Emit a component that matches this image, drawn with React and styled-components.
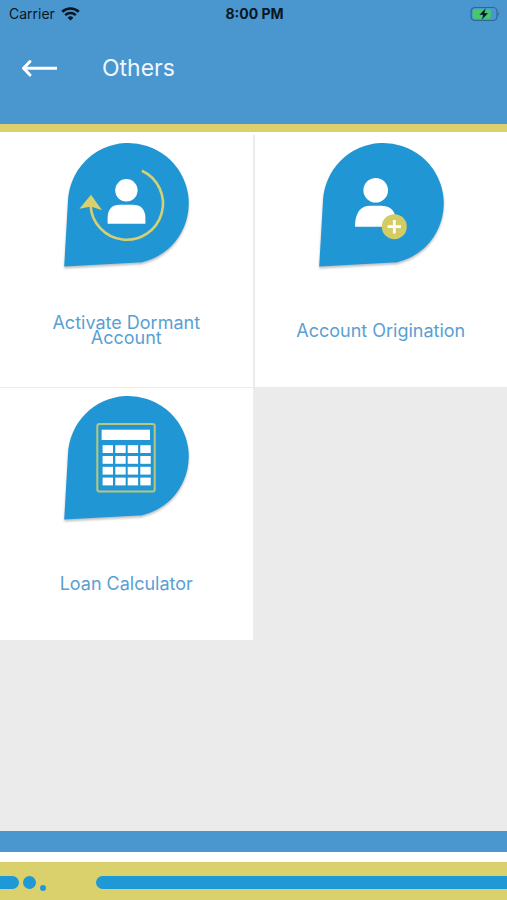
import React from "react";
import styled, { createGlobalStyle } from "styled-components";

const GlobalStyle = createGlobalStyle`
  * { box-sizing: border-box; }
  body { margin: 0; background: #ebebeb; font-family: Inter, "Liberation Sans", sans-serif; }
`;

const Screen = styled.div`
  min-height: 100vh;
  display: flex;
  flex-direction: column;
`;

const Header = styled.header`
  background: #4a96cf;
  border-bottom: 8px solid #dbd16c;
`;

const StatusBar = styled.div`
  display: grid;
  grid-template-columns: 1fr auto 1fr;
  align-items: center;
  height: 27px;
  padding: 0 7px 0 9px;
  font-size: 14px;
  color: #0a1622;
`;

const Carrier = styled.div`
  display: flex;
  align-items: center;
  gap: 6px;
`;

const Clock = styled.time`
  font-weight: 700;
`;

const BatteryIcon = styled.svg`
  justify-self: end;
`;

const TitleBar = styled.div`
  display: flex;
  align-items: center;
  gap: 43px;
  height: 97px;
  padding: 0 20px 16px;
`;

const BackButton = styled.button`
  display: flex;
  padding: 0;
  border: 0;
  background: none;
  cursor: pointer;
`;

const Title = styled.h1`
  margin: 0;
  font-size: 23px;
  font-weight: 400;
  line-height: 28px;
  color: #f0f7fc;
`;

const Menu = styled.main`
  flex: 1;
  display: grid;
  grid-template-columns: 1fr 1fr;
  align-content: start;
  gap: 1px 2px;
  border-top: 3px solid #ffffff;
  background: #ebebeb;
`;

const Tile = styled.button`
  display: flex;
  flex-direction: column;
  align-items: center;
  height: 252px;
  padding: 8px 36px 0;
  border: 0;
  background: #ffffff;
  font-family: inherit;
  cursor: pointer;
`;

const TileIcon = styled.svg`
  flex: none;
  overflow: visible;
`;

const Pin = styled.path`
  fill: #2097d4;
  filter: drop-shadow(0 2px 1px rgba(0, 0, 0, 0.25));
`;

const TileLabel = styled.span`
  flex: 1;
  display: flex;
  align-items: center;
  max-width: 176px;
  font-size: 18px;
  font-weight: 400;
  line-height: 15px;
  text-align: center;
  color: #5a9fd4;
`;

const Footer = styled.footer`
  border-top: 21px solid #4a96cf;
`;

const Pattern = styled.div`
  display: flex;
  align-items: center;
  height: 48px;
  padding: 12px 0 9px;
  border-top: 10px solid #ffffff;
  background: #dbd16c;
`;

const ShortBar = styled.span`
  width: 19px;
  height: 13px;
  border-radius: 0 7px 7px 0;
  background: #1f98d6;
`;

const Dot = styled.span`
  width: ${(p) => p.$size}px;
  height: ${(p) => p.$size}px;
  margin-left: 4px;
  align-self: ${(p) => (p.$low ? "flex-end" : "center")};
  border-radius: 50%;
  background: #1f98d6;
`;

const LongBar = styled.span`
  flex: 1;
  height: 13px;
  margin-left: 50px;
  border-radius: 7px 0 0 7px;
  background: #1f98d6;
`;

function PinIcon({ children }) {
  return (
    <TileIcon width="140" height="130" viewBox="0 0 140 130" aria-hidden="true">
      <Pin d="M8.2 123.4 L12 58 A60.4 60.4 0 1 1 87 119 Q85 119.5 82 119.6 Z" />
      {children}
    </TileIcon>
  );
}

function DormantIcon() {
  return (
    <PinIcon>
      <circle cx="70.4" cy="47.3" r="11.2" fill="#fff" />
      <path d="M51.6 80.7V75C51.6 66 56 61.7 64 61.7H76.6C84.6 61.7 89.4 66 89.4 75V80.7Z" fill="#fff" />
      <path d="M85.9 27.7A36.2 36.2 0 1 1 34.6 62" fill="none" stroke="#d6d070" strokeWidth="2.6" />
      <path d="M35 51.8 L46 67.3 L35 63.4 L23.4 65.7 Z" fill="#dbd16c" />
    </PinIcon>
  );
}

function OriginationIcon() {
  return (
    <PinIcon>
      <circle cx="64.7" cy="47.3" r="12.3" fill="#fff" />
      <path d="M44 83.7C44 69 50 62.7 59 62.7H70C78 62.7 83 66 84.5 74V83.7Z" fill="#fff" />
      <circle cx="83.3" cy="83.7" r="12.5" fill="#d3cb63" />
      <path d="M76.6 83.7H90M83.3 77V90.4" stroke="#fff" strokeWidth="2.8" />
    </PinIcon>
  );
}

const keyColumns = [46.6, 59.3, 71.7, 84.3];
const keyRows = [49.2, 60, 70.8, 81.6];

function CalculatorIcon() {
  return (
    <PinIcon>
      <rect x="41.3" y="28" width="57.4" height="67.6" rx="2" fill="none" stroke="#b9c77c" strokeWidth="2" />
      <rect x="45.6" y="33.7" width="48.4" height="10.3" fill="#fff" />
      {keyRows.map((y) =>
        keyColumns.map((x) => (
          <rect key={`${x}-${y}`} x={x} y={y} width="10.4" height="7.8" fill="#fff" />
        ))
      )}
    </PinIcon>
  );
}

const tiles = [
  { label: "Activate Dormant Account", Icon: DormantIcon },
  { label: "Account Origination", Icon: OriginationIcon },
  { label: "Loan Calculator", Icon: CalculatorIcon },
];

export default function App() {
  return (
    <Screen>
      <GlobalStyle />
      <Header>
        <StatusBar>
          <Carrier>
            Carrier
            <svg width="19" height="14" viewBox="0 0 19 14" fill="none" stroke="#0a1622" aria-hidden="true">
              <path d="M1.2 4.8A12 12 0 0 1 17.8 4.8" strokeWidth="2.6" />
              <path d="M4.2 8.1A7.7 7.7 0 0 1 14.8 8.1" strokeWidth="2.4" />
              <path d="M9.5 13.6L6.6 10.7A4.2 4.2 0 0 1 12.4 10.7Z" fill="#0a1622" stroke="none" />
            </svg>
          </Carrier>
          <Clock>8:00 PM</Clock>
          <BatteryIcon width="30" height="16" viewBox="0 0 30 16" aria-hidden="true">
            <rect x="1" y="1.5" width="26" height="13" rx="4" fill="none" stroke="#2d6793" strokeWidth="1.2" />
            <rect x="2.8" y="3.2" width="18" height="9.6" rx="2" fill="#43cb67" />
            <path d="M28.2 5.8Q30 8 28.2 10.2Z" fill="#2d6793" />
            <path d="M16 1.8L9.2 8.9H13L11.5 14.2L18.3 7.1H14.5Z" fill="#07130f" stroke="#4a96cf" strokeWidth="0.5" />
          </BatteryIcon>
        </StatusBar>
        <TitleBar>
          <BackButton aria-label="Back">
            <svg width="39" height="20" viewBox="0 0 39 20" fill="none" stroke="#fff" strokeWidth="3" strokeLinecap="round" strokeLinejoin="round" aria-hidden="true">
              <path d="M3.5 10.3H37" strokeLinecap="butt" />
              <path d="M10 3.5L3.5 10.3L10 17" />
            </svg>
          </BackButton>
          <Title>Others</Title>
        </TitleBar>
      </Header>
      <Menu>
        {tiles.map(({ label, Icon }) => (
          <Tile key={label}>
            <Icon />
            <TileLabel>{label}</TileLabel>
          </Tile>
        ))}
      </Menu>
      <Footer>
        <Pattern>
          <ShortBar />
          <Dot $size={13} />
          <Dot $size={6} $low />
          <LongBar />
        </Pattern>
      </Footer>
    </Screen>
  );
}
